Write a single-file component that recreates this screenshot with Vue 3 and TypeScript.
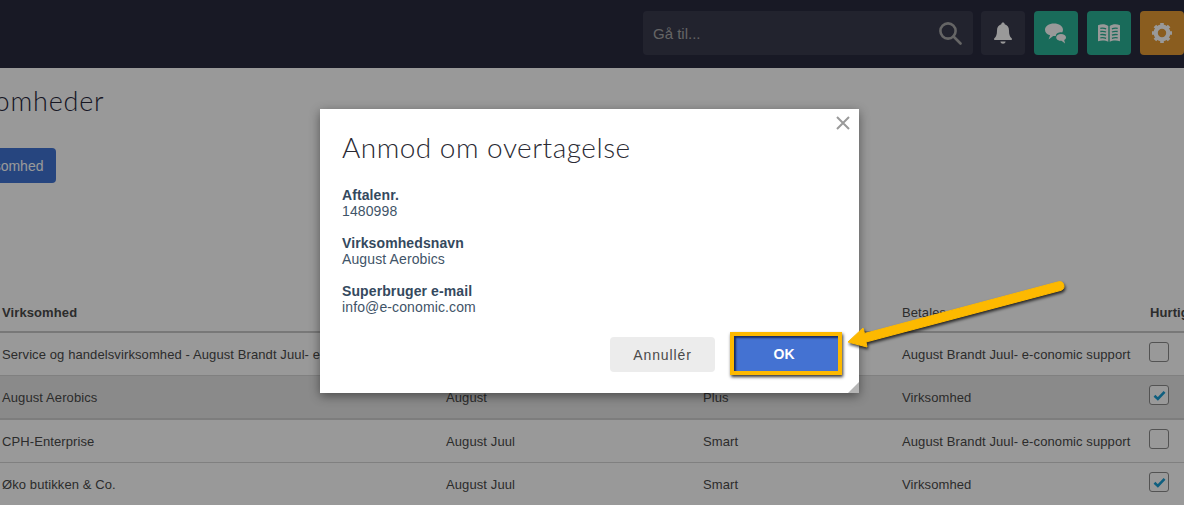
<script setup lang="ts">
interface Company {
  name: string
  owner: string
  plan: string
  payer: string
  quick: boolean
  selected?: boolean
}

const companies: Company[] = [
  { name: 'Service og handelsvirksomhed - August Brandt Juul- e-conomic support', owner: 'August Juul', plan: 'Smart', payer: 'August Brandt Juul- e-conomic support', quick: false },
  { name: 'August Aerobics', owner: 'August', plan: 'Plus', payer: 'Virksomhed', quick: true, selected: true },
  { name: 'CPH-Enterprise', owner: 'August Juul', plan: 'Smart', payer: 'August Brandt Juul- e-conomic support', quick: false },
  { name: 'Øko butikken & Co.', owner: 'August Juul', plan: 'Smart', payer: 'Virksomhed', quick: true },
]

const details = [
  { label: 'Aftalenr.', value: '1480998' },
  { label: 'Virksomhedsnavn', value: 'August Aerobics' },
  { label: 'Superbruger e-mail', value: 'info@e-conomic.com' },
]
</script>

<template>
  <div class="page">
    <header class="topbar">
      <div class="search">
        <span class="search-text">Gå til...</span>
        <svg class="search-icon" width="24" height="24" viewBox="0 0 24 24" fill="none" stroke="#a9a9a9" stroke-width="2.6">
          <circle cx="10" cy="10" r="7.6" />
          <path d="M15.5 15.5 22.5 22.5" stroke-linecap="round" />
        </svg>
      </div>
      <button class="tile dark">
        <svg width="20" height="24" viewBox="0 0 20 24" fill="#ffffff">
          <path d="M10 1.5c1 0 1.6.7 1.7 1.7 2.9.8 4.3 3.2 4.3 6.3 0 4 .8 6 2.6 7.8.3.4.4.7.4 1 0 .4-.3.7-.8.7H1.800c-.5 0-.8-.3-.8-.7 0-.3.1-.6.4-1C3.200 15.500 4 13.500 4 9.500c0-3.100 1.400-5.500 4.300-6.300.1-1 .7-1.700 1.700-1.700Z" />
          <path d="M7.400 20.500h5.200c-.2 1.300-1.300 2.300-2.600 2.300s-2.400-1-2.600-2.300Z" />
        </svg>
      </button>
      <button class="tile teal">
        <svg width="24" height="24" viewBox="0 0 24 24" fill="#ffffff">
          <path d="M10 2.500c5 0 9 2.700 9 6.300 0 1-.3 1.900-.9 2.700-1.200-.5-2.900-.4-4.300.4-1.300.7-2 1.900-2 3.100-.6.100-1.200.1-1.800.1l-.8 0-4.600 3.400 1.500-4.300C3 13.700 1 11.500 1 8.800c0-3.600 4-6.300 9-6.300Z" />
          <path d="M17 13c2.800 0 5 1.500 5 3.400 0 1.100-.7 2-1.800 2.600l.9 3.500-3.600-2.700c-2.900 0-5.300-1.500-5.300-3.400S14.200 13 17 13Z" />
        </svg>
      </button>
      <button class="tile teal">
        <svg width="24" height="20" viewBox="0 0 24 20" fill="none">
          <path d="M1 2.200C4.500.8 8.600 1 11.300 3v15.800C8.600 17.200 4.500 17 1 18.200V2.200ZM23 2.200C19.500.8 15.400 1 12.700 3v15.800c2.700-1.600 6.800-1.800 10.300-.6V2.200Z" fill="#ffffff" />
          <path d="M3.300 5.300c1.800-.3 4-.2 5.800.5M3.300 8.500c1.800-.3 4-.2 5.800.5M3.300 11.700c1.800-.3 4-.2 5.800.5M3.300 14.900c1.800-.3 4-.2 5.800.5M20.700 5.300c-1.800-.3-4-.2-5.800.5M20.700 8.500c-1.800-.3-4-.2-5.800.5M20.700 11.700c-1.800-.3-4-.2-5.800.5M20.700 14.900c-1.800-.3-4-.2-5.800.5" stroke="#2bb296" stroke-width="1.300" />
        </svg>
      </button>
      <button class="tile orange">
        <svg width="22" height="22" viewBox="0 0 22 22" fill="none">
          <circle cx="11" cy="11" r="6.300" stroke="#ffffff" stroke-width="4.200" />
          <path d="M11 1v4M11 17v4M1 11h4M17 11h4M3.900 3.900l2.900 2.900M15.200 15.200l2.900 2.900M18.100 3.900l-2.900 2.900M6.800 15.200l-2.900 2.900" stroke="#ffffff" stroke-width="3.600" />
        </svg>
      </button>
    </header>

    <main class="content">
      <h1 class="title">Virksomheder</h1>
      <button class="primary">Opret virksomhed</button>

      <table class="list">
        <colgroup>
          <col class="c1" /><col class="c2" /><col class="c3" /><col class="c4" /><col class="c5" />
        </colgroup>
        <thead>
          <tr>
            <th>Virksomhed</th>
            <th>Kontakt</th>
            <th>Produkt</th>
            <th>Betales af</th>
            <th>Hurtigadgang</th>
          </tr>
        </thead>
        <tbody>
          <tr v-for="c in companies" :key="c.name" :class="{ selected: c.selected }">
            <td>{{ c.name }}</td>
            <td>{{ c.owner }}</td>
            <td>{{ c.plan }}</td>
            <td>{{ c.payer }}</td>
            <td>
              <span class="check">
                <svg v-if="c.quick" width="13" height="11" viewBox="0 0 14 12" fill="none" stroke="#1a9ed4" stroke-width="2.800">
                  <path d="M1.500 6.300 5.200 9.700 12.500 2" />
                </svg>
              </span>
            </td>
          </tr>
        </tbody>
      </table>
    </main>

    <div class="overlay">
      <section class="modal">
        <button class="close" aria-label="Luk">
          <svg width="14" height="14" viewBox="0 0 14 14" fill="none" stroke="#9a9a9a" stroke-width="2">
            <path d="M1 1 13 13M13 1 1 13" />
          </svg>
        </button>
        <h2 class="modal-title">Anmod om overtagelse</h2>
        <dl class="details">
          <div v-for="d in details" :key="d.label" class="detail">
            <dt>{{ d.label }}</dt>
            <dd>{{ d.value }}</dd>
          </div>
        </dl>
        <div class="actions">
          <button class="cancel">Annullér</button>
          <button class="ok">OK</button>
        </div>
        <span class="grip"></span>
      </section>
    </div>

    <svg class="arrow" width="224" height="80" viewBox="0 0 224 80">
      <path d="M2 66 17 52 18.500 57.500 212.800 5.700A4.500 4.500 0 0 1 215.200 14.300L20 66 21 71Z" fill="#fdb900" stroke="#fdb900" stroke-linejoin="round" />
    </svg>
  </div>
</template>

<style>
body {
  margin: 0;
  background: #fff;
}
</style>

<style scoped>
.page {
  position: relative;
  width: 1184px;
  height: 505px;
  overflow: hidden;
  background: #ffffff;
  font-family: "Liberation Sans", Arial, sans-serif;
  font-size: 14px;
  color: #4a4a4a;
}
button {
  font-family: inherit;
  border: 0;
  padding: 0;
}
.topbar {
  height: 68px;
  box-sizing: border-box;
  padding: 11px 0 0 643px;
  background: #282a3f;
  display: flex;
  gap: 9px;
  align-items: flex-start;
}
.search {
  width: 330px;
  height: 44px;
  box-sizing: border-box;
  margin-right: -1px;
  padding: 0 11px 0 10px;
  border-radius: 4px;
  background: #3a3b4e;
  display: flex;
  align-items: center;
  justify-content: space-between;
  color: #a8a8a8;
  font-size: 15px;
  flex: none;
}
.tile {
  width: 44px;
  height: 44px;
  border-radius: 4px;
  display: flex;
  align-items: center;
  justify-content: center;
  flex: none;
}
.dark { background: #3a3b4e; }
.teal { background: #2bb296; }
.orange { background: #e69b35; }
.content {
  margin-left: -67px;
}
.title {
  margin: 19px 0 0;
  font-family: Lato, sans-serif;
  font-weight: 300;
  font-size: 27px;
  line-height: 28px;
  letter-spacing: 0.8px;
  color: #26263a;
  white-space: nowrap;
}
.primary {
  display: block;
  margin-top: 33px;
  width: 123px;
  height: 35px;
  box-sizing: border-box;
  padding-right: 16px;
  text-align: right;
  border-radius: 4px;
  background: #4073d4;
  color: #ffffff;
  font-size: 14px;
  white-space: nowrap;
}
.list {
  margin: 106px 0 0 67px;
  width: 1250px;
  table-layout: fixed;
  border-collapse: collapse;
  font-size: 13px;
  letter-spacing: 0.1px;
}
.c1 { width: 444px; }
.c2 { width: 257px; }
.c3 { width: 199px; }
.c4 { width: 248px; }
.c5 { width: 102px; }
th {
  height: 43px;
  box-sizing: border-box;
  padding: 0 0 11px 2px;
  vertical-align: bottom;
  text-align: left;
  font-weight: 400;
  color: #4a4a4a;
  border-bottom: 2px solid #c8c8c8;
  white-space: nowrap;
}
th:first-child, th:last-child { font-weight: 700; }
td {
  height: 43px;
  box-sizing: border-box;
  padding: 2px 0 0 2px;
  border-bottom: 1px solid #d5d5d5;
  white-space: nowrap;
  overflow: hidden;
}
tr.selected td {
  height: 44px;
  background: #e6e6e6;
  border-bottom: 2px solid #d0d0d0;
}
.check {
  display: flex;
  align-items: center;
  justify-content: center;
  width: 18px;
  height: 18px;
  margin: 0 0 5px -1px;
  border: 1px solid #8a8a8a;
  border-radius: 3px;
  background: #ffffff;
}
.overlay {
  position: absolute;
  inset: 0;
  background: rgba(0, 0, 0, 0.4);
  padding: 109px 0 0 320px;
}
.modal {
  position: relative;
  width: 539px;
  height: 284px;
  box-sizing: border-box;
  padding: 20px 17px 0 22px;
  background: #ffffff;
  box-shadow: 0 3px 10px rgba(0, 0, 0, 0.45);
}
.close {
  position: absolute;
  top: 7px;
  right: 9px;
  width: 14px;
  height: 14px;
  background: none;
  line-height: 0;
}
.modal-title {
  margin: 0;
  font-family: Lato, sans-serif;
  font-weight: 300;
  font-size: 28px;
  line-height: 36px;
  letter-spacing: 0.5px;
  color: #2a2a33;
  white-space: nowrap;
}
.details {
  margin: 22px 0 0;
}
.detail { margin-bottom: 16px; }
dt {
  font-weight: 700;
  font-size: 14px;
  line-height: 16px;
  color: #34495e;
  letter-spacing: 0.1px;
}
dd {
  margin: 0;
  font-size: 14px;
  line-height: 16px;
  color: #3f5468;
  letter-spacing: 0.12px;
}
.actions {
  position: absolute;
  right: 17px;
  bottom: 18px;
  display: flex;
  align-items: flex-start;
  gap: 15px;
}
.cancel {
  width: 105px;
  height: 35px;
  margin-top: 5px;
  border-radius: 4px;
  background: #ececec;
  color: #4a4a4a;
  font-size: 14px;
  letter-spacing: 0.9px;
}
.ok {
  width: 112px;
  height: 43px;
  box-sizing: border-box;
  border: 4px solid #fdb900;
  padding-right: 4px;
  background: #4472d2;
  color: #ffffff;
  font-size: 14px;
  font-weight: 700;
  box-shadow: 1px 2px 3px rgba(0, 0, 0, 0.8), inset 2px 2px 2px rgba(10, 20, 60, 0.75);
}
.grip {
  position: absolute;
  right: 0;
  bottom: 0;
  width: 0;
  height: 0;
  border-style: solid;
  border-width: 0 0 11px 11px;
  border-color: transparent transparent #b5b5b5 transparent;
}
.arrow {
  position: absolute;
  left: 846px;
  top: 276px;
  filter: drop-shadow(1px 2px 1.5px rgba(0, 0, 0, 0.75));
}
</style>
